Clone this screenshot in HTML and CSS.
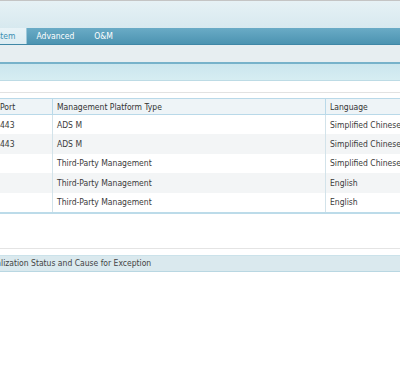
FILE: index.html
```html
<!DOCTYPE html>
<html lang="en">
<head>
  <meta charset="UTF-8">
  <title>Management Platform</title>
  <link rel="stylesheet" href="styles.css">
</head>
<body>
  <div class="page">
    <div class="topbar"></div>

    <div class="tabs">
      <div class="tab active">System</div>
      <div class="tab">Advanced</div>
      <div class="tab">O&amp;M</div>
    </div>

    <div class="subbar"></div>
    <div class="toolbar"></div>
    <div class="spacer"></div>

    <table class="grid">
      <thead>
        <tr>
          <th class="col-no">No.</th>
          <th class="col-port">Port</th>
          <th class="col-type">Management Platform Type</th>
          <th class="col-lang">Language</th>
        </tr>
      </thead>
      <tbody>
        <tr>
          <td>1</td>
          <td>443</td>
          <td>ADS M</td>
          <td>Simplified Chinese</td>
        </tr>
        <tr>
          <td>2</td>
          <td>443</td>
          <td>ADS M</td>
          <td>Simplified Chinese</td>
        </tr>
        <tr>
          <td>3</td>
          <td></td>
          <td>Third-Party Management</td>
          <td>Simplified Chinese</td>
        </tr>
        <tr>
          <td>4</td>
          <td></td>
          <td>Third-Party Management</td>
          <td>English</td>
        </tr>
        <tr>
          <td>5</td>
          <td></td>
          <td>Third-Party Management</td>
          <td>English</td>
        </tr>
      </tbody>
    </table>

    <div class="divider"></div>

    <div class="section-title">Initialization Status and Cause for Exception</div>
  </div>
</body>
</html>
```

FILE: styles.css
```css
body {
  margin: 0;
  overflow: hidden;
  background-color: #fff;
  font-family: "DejaVu Sans Condensed", "DejaVu Sans", sans-serif;
  font-stretch: condensed;
  font-size: 8.5px;
  color: #3a3a3a;
}

.page {
  margin-left: -25px;
  width: 520px;
}

.topbar {
  height: 27px;
  border-top: 1px solid #c4c4c4;
  background: linear-gradient(#e6f1f5, #d7e9ef);
}

.tabs {
  display: flex;
  height: 16px;
  background: linear-gradient(#6aabc6, #4c93b1);
  border-bottom: 1px solid #3f87a6;
}

.tab {
  padding: 0 10px;
  line-height: 16px;
  color: #fff;
}

.tab.active {
  padding-left: 12px;
  background: linear-gradient(#e8f3f7, #dcecf2);
  border-right: 1px solid #9cc8da;
  color: #3c8fb3;
}

.subbar {
  height: 17px;
  background-color: #e7eef1;
}

.toolbar {
  height: 16px;
  border-top: 2px solid #77b2ca;
  border-bottom: 1px solid #bddbe5;
  background: linear-gradient(#cbe6ee, #d6edf2);
}

.spacer {
  height: 11px;
  border-bottom: 1px solid #e2e2e2;
  margin-bottom: 5px;
}

.grid {
  width: 500px;
  border-collapse: collapse;
  border-top: 1px solid #b9d9e9;
  border-bottom: 2px solid #bcdbe9;
  table-layout: fixed;
}

.grid th {
  height: 15px;
  padding: 0 4px;
  text-align: left;
  font-weight: normal;
  color: #333;
  background-color: #eef4f7;
  border-bottom: 1px solid #b9d9e9;
  border-left: 1px solid #b9d9e9;
  white-space: nowrap;
  overflow: hidden;
}

.grid td {
  height: 19.4px;
  padding: 0 4px;
  border-left: 1px solid #d3e3ea;
  white-space: nowrap;
  overflow: hidden;
}

.grid tbody tr:nth-child(even) td {
  background-color: #f3f5f6;
}

.col-no {
  width: 11px;
}

.col-port {
  width: 48px;
}

.col-type {
  width: 264px;
}

.divider {
  height: 34px;
  border-bottom: 1px solid #e4e4e4;
  margin-bottom: 6px;
}

.section-title {
  height: 15px;
  line-height: 15px;
  padding-left: 7px;
  border-top: 1px solid #cbe2ea;
  border-bottom: 1px solid #b9d7e2;
  background-color: #dae9ee;
  color: #444;
}
```
